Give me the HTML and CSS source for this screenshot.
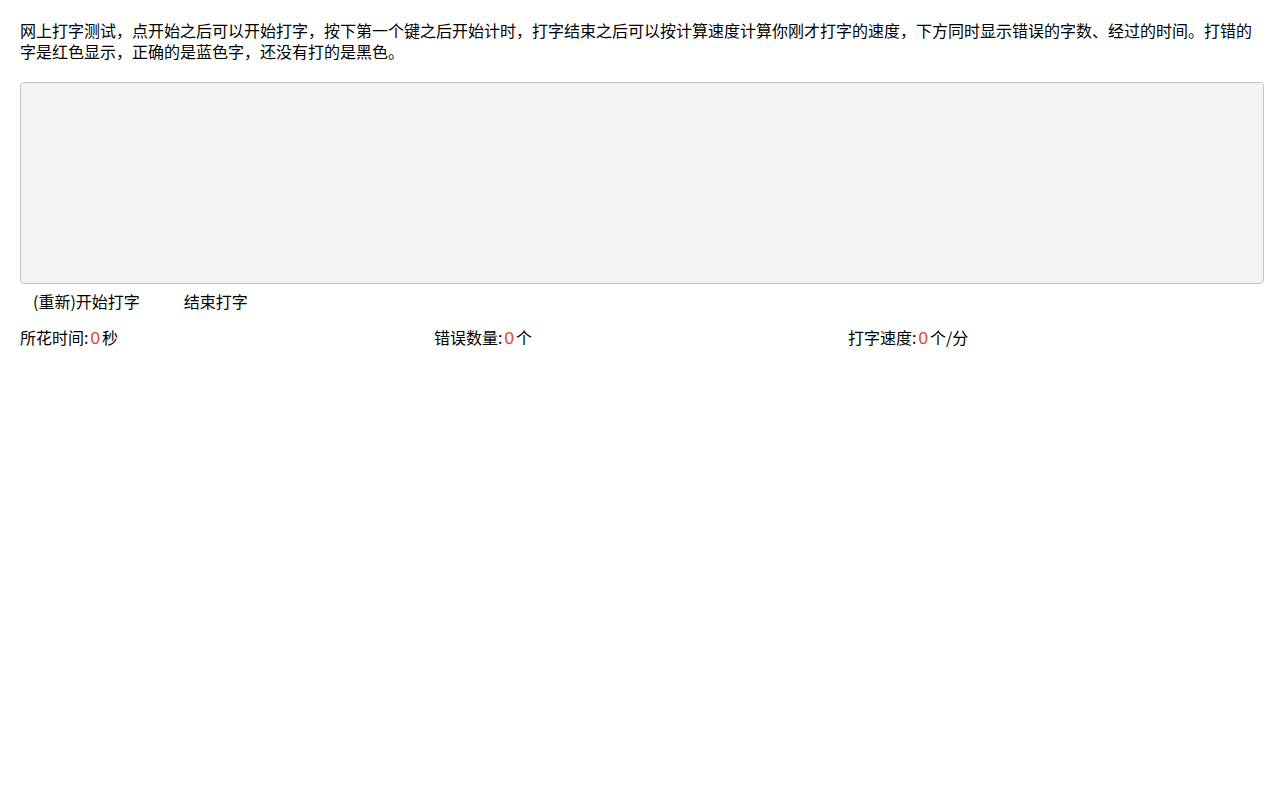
FILE: index.html
```html
<!DOCTYPE html>
<html lang="zh-CN">
<head>
<meta charset="utf-8">
<title>打字测试</title>
<link rel="stylesheet" href="styles.css">
</head>
<body>
<div class="page">
  <p class="intro">网上打字测试，点开始之后可以开始打字，按下第一个键之后开始计时，打字结束之后可以按计算速度计算你刚才打字的速度，下方同时显示错误的字数、经过的时间。打错的字是红色显示，正确的是蓝色字，还没有打的是黑色。</p>
  <div class="typing-box"></div>
  <div class="actions">
    <button class="btn">(重新)开始打字</button>
    <button class="btn">结束打字</button>
  </div>
  <div class="stats">
    <div class="stat">所花时间:<span class="num">0</span>秒</div>
    <div class="stat">错误数量:<span class="num">0</span>个</div>
    <div class="stat">打字速度:<span class="num">0</span>个/分</div>
  </div>
</div>
</body>
</html>
```
FILE: styles.css
```css
* { box-sizing: border-box; }
html, body { margin: 0; padding: 0; background: #fff; }
body {
  font-family: "Noto Sans CJK SC", "Liberation Sans", sans-serif;
  font-size: 16px;
  color: #000;
}
.page { padding: 20px; }
.intro {
  margin: 0 0 20px 0;
  line-height: 21px;
}
.typing-box {
  box-sizing: content-box;
  width: 100%;
  height: 200px;
  background: #f2f3f5;
  border: 1px solid #c4c4c4;
  border-radius: 4px;
}
.actions {
  display: flex;
  gap: 18px;
}
.btn {
  font: inherit;
  line-height: 22px;
  padding: 6px 13px;
  background: transparent;
  border: none;
  color: #000;
  cursor: pointer;
}
.stats {
  display: grid;
  grid-template-columns: repeat(3, 1fr);
  margin-top: 8px;
  line-height: 22px;
}
.num {
  color: #e8412c;
  font-family: "Liberation Sans", sans-serif;
  font-size: 17px;
  margin: 0 2px;
}
```
